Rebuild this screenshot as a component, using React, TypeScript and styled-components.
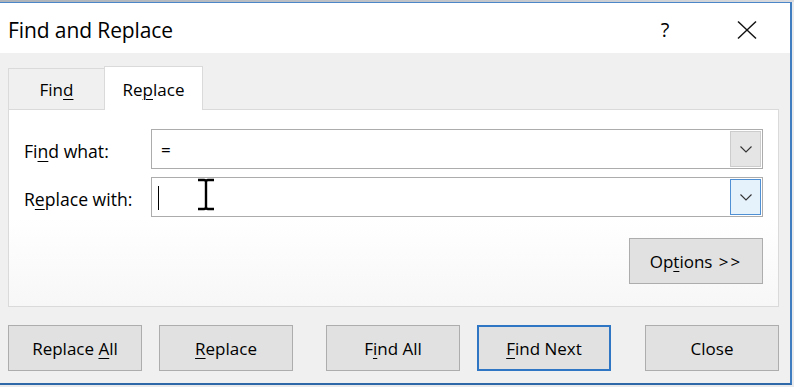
import React from "react";
import styled, { createGlobalStyle } from "styled-components";

const GlobalStyle = createGlobalStyle`
  html, body {
    margin: 0;
    padding: 0;
    background: #e6e7e9;
  }
  * {
    box-sizing: border-box;
  }
`;

const Screen = styled.div`
  width: 794px;
  height: 387px;
  overflow: hidden;
  display: flex;
  flex-direction: column;
  font-family: "Open Sans", "Noto Sans", sans-serif;
  color: #000;
  background: #e9eaec;
`;

const TopStrip = styled.div`
  height: 2px;
  flex: none;
  background: linear-gradient(90deg, #aeb3b9 0%, #c3c7cc 60%, #d8dadd 100%);
`;

const Window = styled.div`
  width: 792px;
  height: 383px;
  flex: none;
  display: flex;
  flex-direction: column;
  border-top: 1px solid #4a86c8;
  border-right: 2px solid #3f7cc0;
  border-bottom: 2px solid #2e68a8;
`;

const TitleBar = styled.div`
  height: 50px;
  flex: none;
  background: #fff;
  display: flex;
  align-items: center;
  padding: 3px 0 0 8px;
`;

const Title = styled.div`
  flex: 1;
  font-size: 21px;
  letter-spacing: -0.1px;
`;

const TitleButton = styled.div<{ $w: number }>`
  width: ${(p) => p.$w}px;
  height: 100%;
  display: flex;
  align-items: center;
  justify-content: center;
  font-size: 20px;
`;

const Body = styled.div`
  flex: 1;
  background: #f0f0f0;
  padding: 14px 11px 0 8px;
  display: flex;
  flex-direction: column;
`;

const TabRow = styled.div`
  display: flex;
  align-items: flex-end;
  height: 43px;
  position: relative;
  z-index: 1;
  margin-bottom: -1px;
`;

const Tab = styled.div<{ $active?: boolean; $w: number }>`
  width: ${(p) => p.$w}px;
  height: ${(p) => (p.$active ? 44 : 42)}px;
  display: flex;
  align-items: center;
  justify-content: center;
  padding-top: 1px;
  font-size: 17px;
  background: ${(p) => (p.$active ? "#fff" : "#f0f0f0")};
  border: 1px solid #dadada;
  border-bottom: ${(p) => (p.$active ? "none" : "1px solid #dadada")};
  border-right: ${(p) => (p.$active ? "1px solid #dadada" : "none")};
`;

const Panel = styled.div`
  height: 198px;
  flex: none;
  background: linear-gradient(180deg, #ffffff 0%, #ffffff 55%, #f7f7f7 100%);
  border: 1px solid #dadada;
  padding: 19px 15px 0 15px;
  display: flex;
  flex-direction: column;
`;

const FieldGrid = styled.div`
  display: grid;
  grid-template-columns: 127px 1fr;
  row-gap: 8px;
  align-items: center;
`;

const Label = styled.div`
  font-size: 17.6px;
  padding-top: 3px;
`;

const Field = styled.div`
  height: 40px;
  border: 1px solid #acacac;
  background: #fff;
  display: flex;
  align-items: center;
  position: relative;
`;

const FieldText = styled.div`
  flex: 1;
  display: flex;
  align-items: center;
  padding-left: 9px;
  font-size: 17px;
  height: 100%;
`;

const Caret = styled.div`
  width: 1px;
  height: 24px;
  background: #000;
  margin-left: -3px;
  margin-top: 2px;
`;

const DropButton = styled.div<{ $hover?: boolean }>`
  width: 31px;
  height: 36px;
  margin-right: 1px;
  display: flex;
  align-items: center;
  justify-content: center;
  background: ${(p) => (p.$hover ? "#e5f1fb" : "#e5e5e5")};
  border: 1px solid ${(p) => (p.$hover ? "#4f8fd3" : "#cccccc")};
`;

const IBeam = styled.svg`
  position: absolute;
  left: 44px;
  top: 0px;
`;

const OptionsRow = styled.div`
  display: flex;
  justify-content: flex-end;
  margin-top: 21px;
`;

const Button = styled.div<{ $default?: boolean }>`
  width: 134px;
  height: 46px;
  display: flex;
  align-items: center;
  justify-content: center;
  font-size: 17px;
  padding-top: 1px;
  background: #e1e1e1;
  border: ${(p) => (p.$default ? "2px solid #2f76c4" : "1px solid #adadad")};
`;

const ButtonRow = styled.div`
  display: flex;
  margin-top: 18px;
`;

const Gap = styled.div<{ $w: number }>`
  width: ${(p) => p.$w}px;
  flex: none;
`;

const Key = styled.span`
  text-decoration: underline;
  text-decoration-thickness: 1px;
  text-underline-offset: 3px;
`;

const Arrows = styled.span`
  letter-spacing: 2px;
  margin-left: 2px;
`;

const Chevron = () => (
  <svg width="12" height="7" viewBox="0 0 12 7">
    <polyline points="0.5,0.5 6,6 11.5,0.5" fill="none" stroke="#333" strokeWidth="1.1" />
  </svg>
);

const CloseIcon = () => (
  <svg width="20" height="18" viewBox="0 0 20 18">
    <line x1="1" y1="0.5" x2="19" y2="17.5" stroke="#111" strokeWidth="1.4" />
    <line x1="19" y1="0.5" x2="1" y2="17.5" stroke="#111" strokeWidth="1.4" />
  </svg>
);

const App: React.FC = () => {
  return (
    <>
      <GlobalStyle />
      <Screen>
        <TopStrip />
        <Window>
          <TitleBar>
            <Title>Find and Replace</Title>
            <TitleButton $w={42}>?</TitleButton>
            <Gap $w={40} />
            <TitleButton $w={42}>
              <CloseIcon />
            </TitleButton>
            <Gap $w={22} />
          </TitleBar>
          <Body>
            <TabRow>
              <Tab $w={96}>
                <span>
                  Fin<Key>d</Key>
                </span>
              </Tab>
              <Tab $w={99} $active>
                <span>
                  Re<Key>p</Key>lace
                </span>
              </Tab>
            </TabRow>
            <Panel>
              <FieldGrid>
                <Label>
                  Fi<Key>n</Key>d what:
                </Label>
                <Field>
                  <FieldText>=</FieldText>
                  <DropButton>
                    <Chevron />
                  </DropButton>
                </Field>
                <Label>
                  R<Key>e</Key>place with:
                </Label>
                <Field>
                  <FieldText>
                    <Caret />
                  </FieldText>
                  <IBeam width="20" height="33" viewBox="0 0 20 33">
                    <path
                      d="M2 2 H8 Q10 2 10 4 Q10 2 12 2 H18 M10 4 V29 M2 31 H8 Q10 31 10 29 Q10 31 12 31 H18"
                      fill="none"
                      stroke="#fff"
                      strokeWidth="4.5"
                      strokeLinecap="round"
                    />
                    <path
                      d="M2 2 H8 Q10 2 10 4 Q10 2 12 2 H18 M10 4 V29 M2 31 H8 Q10 31 10 29 Q10 31 12 31 H18"
                      fill="none"
                      stroke="#000"
                      strokeWidth="2.4"
                    />
                  </IBeam>
                  <DropButton $hover>
                    <Chevron />
                  </DropButton>
                </Field>
              </FieldGrid>
              <OptionsRow>
                <Button>
                  <span>
                    Op<Key>t</Key>ions <Arrows>&gt;&gt;</Arrows>
                  </span>
                </Button>
              </OptionsRow>
            </Panel>
            <ButtonRow>
              <Button>
                <span>
                  Replace <Key>A</Key>ll
                </span>
              </Button>
              <Gap $w={17} />
              <Button>
                <span>
                  <Key>R</Key>eplace
                </span>
              </Button>
              <Gap $w={33} />
              <Button>
                <span>
                  F<Key>i</Key>nd All
                </span>
              </Button>
              <Gap $w={17} />
              <Button $default>
                <span>
                  <Key>F</Key>ind Next
                </span>
              </Button>
              <Gap $w={34} />
              <Button>
                <span>Close</span>
              </Button>
            </ButtonRow>
          </Body>
        </Window>
      </Screen>
    </>
  );
};

export default App;
